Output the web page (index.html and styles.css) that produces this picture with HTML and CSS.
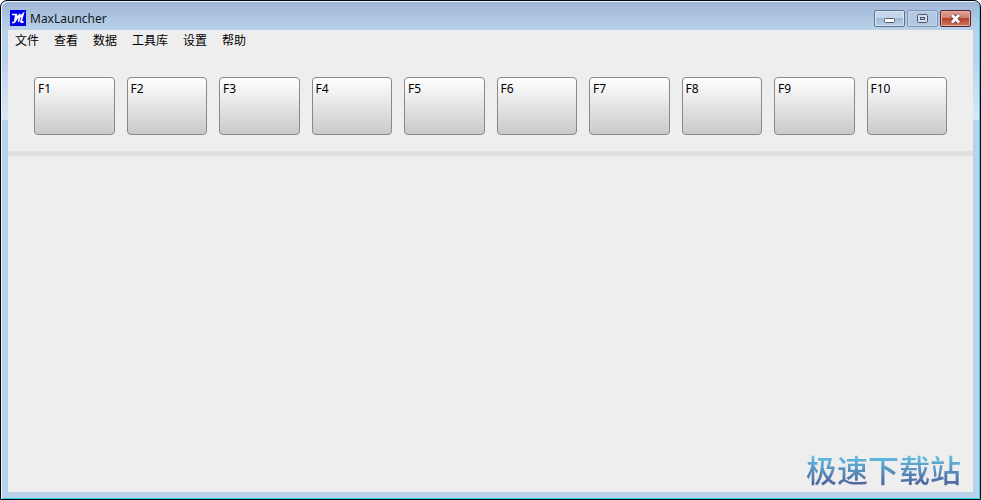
FILE: index.html
```html
<!DOCTYPE html>
<html lang="zh-CN">
<head>
<meta charset="utf-8">
<title>MaxLauncher</title>
<link rel="stylesheet" href="styles.css">
</head>
<body>
<div class="window">
  <header class="titlebar">
    <svg class="logo" viewBox="0 0 16 16" aria-hidden="true">
      <rect width="16" height="16" fill="#0000e8"/>
      <path d="M2 4.500H6L4.500 12.500M2 12.500H4.500M6.500 4.500L6.500 9L10 4L8.500 12M9 8L13 4L11 11.500Q11.500 13 13.500 11.500" fill="none" stroke="#fff" stroke-width="1.700"/>
    </svg>
    <h1 class="title">MaxLauncher</h1>
    <div class="controls">
      <button class="control" type="button" aria-label="最小化">
        <svg class="glyph" viewBox="0 0 14 12"><rect x="1.500" y="5.500" width="10" height="4" rx="1" fill="#fff" stroke="#4c5a6d"/></svg>
      </button>
      <button class="control control-faded" type="button" aria-label="最大化">
        <svg class="glyph" viewBox="0 0 14 12"><rect x="1.500" y="1.500" width="10" height="8" rx="1" fill="#d3dfec" stroke="#4c5a6d"/><rect x="4.500" y="4.500" width="4" height="2" fill="#b7cbe2" stroke="#4c5a6d"/></svg>
      </button>
      <button class="control control-close" type="button" aria-label="关闭">
        <svg class="glyph" viewBox="0 0 14 12"><path d="M3 2L10 9.500M10 2L3 9.500" stroke="#66404a" stroke-width="4.500"/><path d="M3 2L10 9.500M10 2L3 9.500" stroke="#fff" stroke-width="2.800"/></svg>
      </button>
    </div>
  </header>
  <main class="client">
    <nav class="menu">
      <button class="menu-item" type="button">文件</button>
      <button class="menu-item" type="button">查看</button>
      <button class="menu-item" type="button">数据</button>
      <button class="menu-item" type="button">工具库</button>
      <button class="menu-item" type="button">设置</button>
      <button class="menu-item" type="button">帮助</button>
    </nav>
    <div class="keys">
      <button class="key" type="button">F1</button>
      <button class="key" type="button">F2</button>
      <button class="key" type="button">F3</button>
      <button class="key" type="button">F4</button>
      <button class="key" type="button">F5</button>
      <button class="key" type="button">F6</button>
      <button class="key" type="button">F7</button>
      <button class="key" type="button">F8</button>
      <button class="key" type="button">F9</button>
      <button class="key" type="button">F10</button>
    </div>
    <div class="divider"></div>
    <div class="workspace"><span class="brand">极速下载站</span></div>
  </main>
</div>
</body>
</html>
```
FILE: styles.css
```css
* {
  box-sizing: border-box;
}

body {
  margin: 0;
  background: #fff;
  color: #000;
  font: 12px/16px "Noto Sans", "Noto Sans CJK SC", sans-serif;
}

button {
  margin: 0;
  padding: 0;
  border: 0;
  background: none;
  color: inherit;
  font: inherit;
}

.window {
  display: flex;
  flex-direction: column;
  min-height: 100vh;
  padding: 0 7px 7px;
  border: 1px solid #05080c;
  border-radius: 7px 7px 0 0;
  background:
    linear-gradient(#9eb6d5, #bad1ea) 0 0 / 100% 29px no-repeat,
    linear-gradient(#bad1ea, #bad1ea 30%, #dbe8f8) 0 29px / 100% 90px no-repeat,
    #b9d1ea;
  box-shadow: inset 1px 1px #edf5fc, inset -1px -1px #38d0e4;
}

.titlebar {
  display: flex;
  height: 29px;
  padding: 9px 2px 0;
}

.logo {
  width: 16px;
  height: 16px;
}

.title {
  flex: 1;
  margin: 0 0 0 4px;
  color: #101820;
  font-size: 12px;
  font-weight: 400;
  line-height: 17px;
}

.controls {
  display: flex;
  gap: 2px;
}

.control {
  display: flex;
  align-items: center;
  justify-content: center;
  width: 31px;
  height: 17px;
  border: 1px solid #5c728e;
  border-radius: 2px;
  background: linear-gradient(#c5d6ea 45%, #a2bad6 50%, #b9cfe8);
  box-shadow: inset 0 0 0 1px #dce8f5;
}

.control-faded {
  border-color: #8297b3;
  background: #b3c9e3;
  box-shadow: inset 0 0 0 1px #c3d5ea;
}

.control-close {
  border-color: #502532;
  background: linear-gradient(#dfa296, #ce8071 45%, #b8402c 50%, #d0765d);
  box-shadow: inset 0 0 0 1px #e5aea5;
}

.glyph {
  width: 14px;
  height: 12px;
}

.client {
  display: flex;
  flex: 1;
  flex-direction: column;
  background: #eee;
}

.menu {
  display: flex;
  gap: 15px;
  padding: 3px 7px;
}

.menu-item {
  height: 16px;
}

.keys {
  display: grid;
  grid-template-columns: repeat(10, 1fr);
  gap: 12px;
  padding: 25px 26px 16px;
}

.key {
  display: flex;
  height: 58px;
  padding: 3px;
  border: 1px solid #898989;
  border-radius: 4px;
  background: linear-gradient(#fff, #cacaca);
}

.divider {
  height: 5px;
  background: #e0e0e0;
}

.workspace {
  display: flex;
  flex: 1;
  align-items: flex-end;
  justify-content: flex-end;
  padding: 0 12px 0 0;
}

.brand {
  background: linear-gradient(#60bddf 20%, #50689f 80%);
  background-clip: text;
  color: transparent;
  font-size: 31px;
  font-weight: 500;
  line-height: 44px;
}
```
